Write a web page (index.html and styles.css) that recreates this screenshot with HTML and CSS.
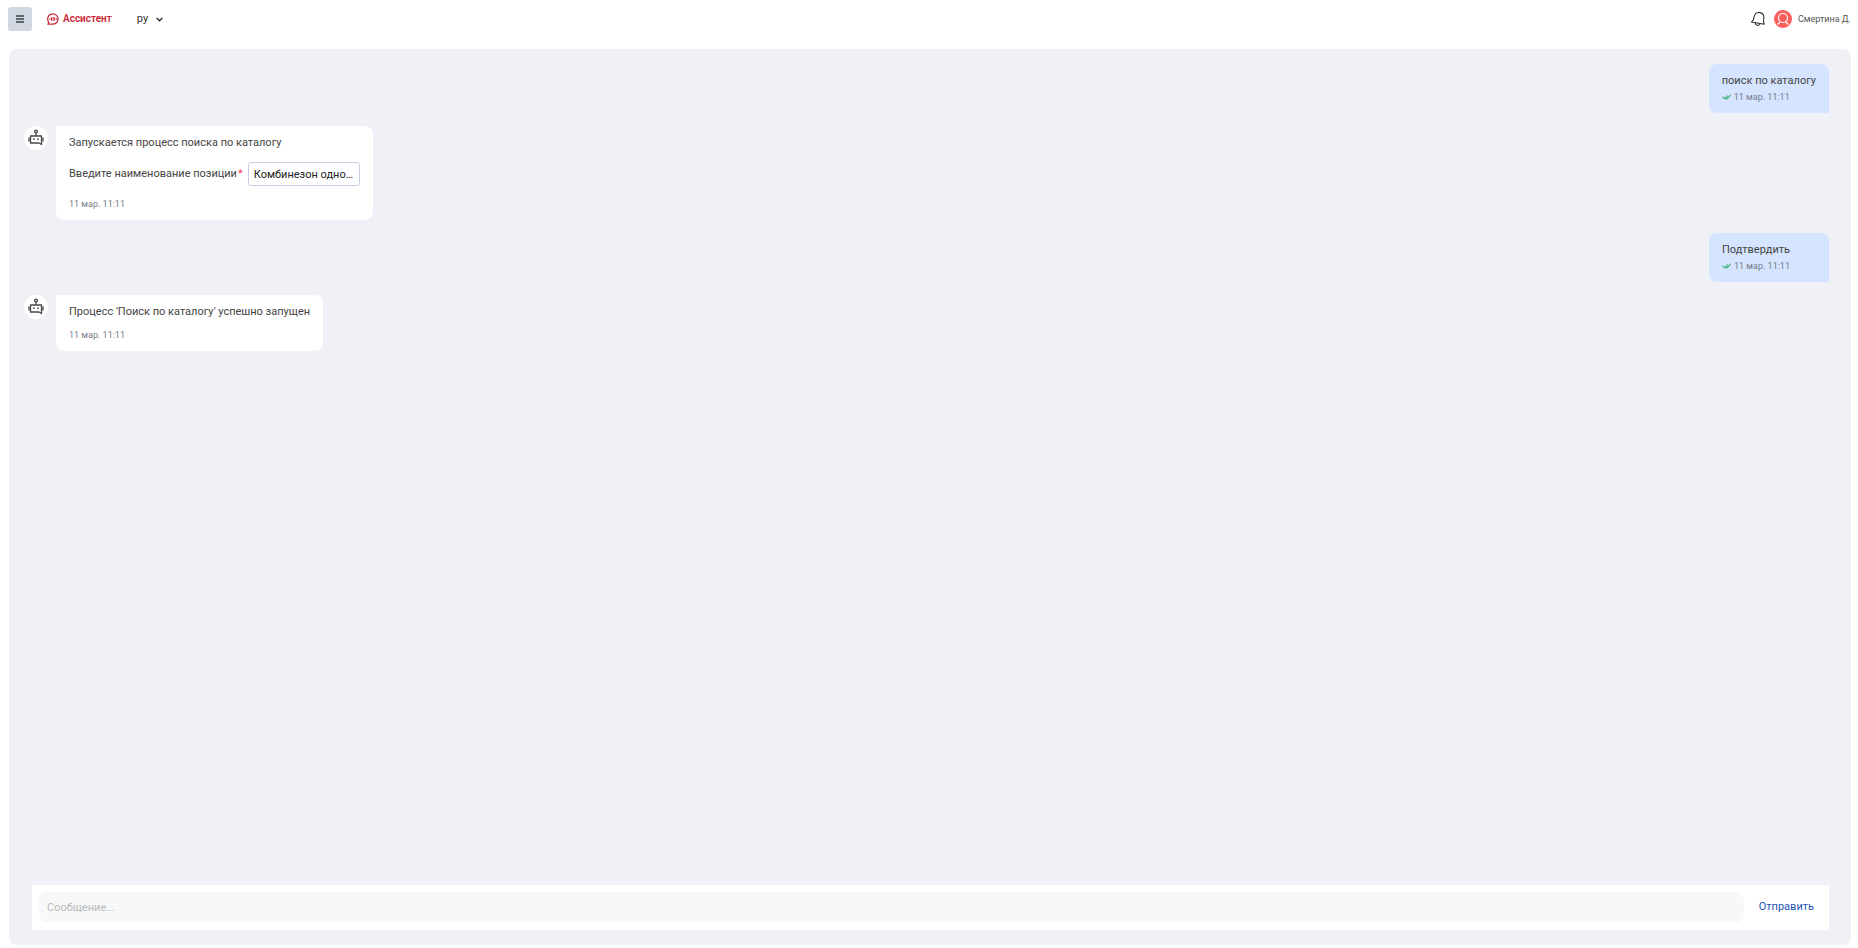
FILE: index.html
```html
<!DOCTYPE html>
<html lang="ru">
<head>
  <meta charset="UTF-8">
  <meta name="viewport" content="width=device-width, initial-scale=1.0">
  <title>Ассистент</title>
  <link rel="stylesheet" href="styles.css">
</head>
<body>
  <svg class="sprite" aria-hidden="true">
    <symbol id="robot" viewBox="0 0 16 18">
      <g fill="none" stroke="#484848" stroke-width="1.3">
        <circle cx="8" cy="3.5" r="1.4"/>
        <path d="M8 5v3M2.5 8h11v8.5l-2.5-1.5H2.5z" stroke-linejoin="round"/>
        <path d="M1 10v3M15 10v3" stroke-linecap="round"/>
      </g>
      <path d="M5 10.5h1.6v1.6H5zM9.2 10.5h1.6v1.6H9.2z" fill="#484848"/>
    </symbol>
    <symbol id="checks" viewBox="0 0 9 6">
      <path d="M.6 2.6 2.7 4.8 5.6 1.6M4 3.8l1 1L8.5 1" fill="none" stroke="#43b581" stroke-width="1.2"/>
    </symbol>
  </svg>

  <header class="header">
    <button class="menu-btn" type="button" aria-label="Меню">
      <svg width="8" height="8" viewBox="0 0 8 8"><path d="M0 1h8M0 4h8M0 7h8" stroke="#3c4148" stroke-width="1.5"/></svg>
    </button>
    <a class="brand" href="#">
      <svg width="12" height="12" viewBox="0 0 12 12" fill="none" stroke="#cb2634">
        <path d="M1.9 9.4A5.2 5.2 0 1 1 6 11.2H.8z" stroke-width="1.2" stroke-linejoin="round"/>
        <path d="M2.9 5.2v1.6M4.5 4.4v3.2M6.1 3.8v4.4M7.7 4.4v3.2M9.3 5.2v1.600" stroke-width="1"/>
      </svg>
      Ассистент
    </a>
    <button class="lang" type="button">
      ру
      <svg width="7" height="5" viewBox="0 0 7 5"><path d="M.6.9 3.5 3.8 6.4.9" fill="none" stroke="#222" stroke-width="1.3"/></svg>
    </button>
    <div class="user">
      <button class="bell" type="button" aria-label="Уведомления">
        <svg width="16" height="16" viewBox="0 0 16 16" fill="none" stroke="#333" stroke-width="1.1" stroke-linejoin="round">
          <path d="M4.2 5.4C5 2.400 7.500 1.200 10 1.600 12.900 2.200 14.200 4.500 13.800 7.500L13.400 10.500 14.200 13.200 1.400 11 3.400 8.800z"/>
          <path d="M5.400 11.900c0 2.600 3.200 3.500 4.400 1" stroke-linecap="round"/>
        </svg>
      </button>
      <a class="profile" href="#">
        <svg width="18" height="18" viewBox="0 0 18 18">
          <circle cx="9" cy="9" r="9" fill="#fa5f5c"/>
          <circle cx="9" cy="8" r="4.5" fill="none" stroke="#fff" stroke-width="1.2"/>
          <path d="M3.5 14.500 6.300 12M14.500 14.500 11.700 12" stroke="#fff" stroke-width="1.2"/>
        </svg>
        Смертина Д.
      </a>
    </div>
  </header>

  <main class="chat">
    <div class="messages">
      <div class="message own">
        <p class="text">поиск по каталогу</p>
        <div class="time"><svg width="9" height="6"><use href="#checks"/></svg>11 мар. 11:11</div>
      </div>

      <div class="row">
        <div class="avatar"><svg width="16" height="18"><use href="#robot"/></svg></div>
        <div class="message bot">
          <p class="text">Запускается процесс поиска по каталогу</p>
          <div class="field">
            <label for="position">Введите наименование позиции<span class="required">*</span></label>
            <input id="position" type="text" value="Комбинезон одно..." readonly>
          </div>
          <div class="time">11 мар. 11:11</div>
        </div>
      </div>

      <div class="message own">
        <p class="text">Подтвердить</p>
        <div class="time"><svg width="9" height="6"><use href="#checks"/></svg>11 мар. 11:11</div>
      </div>

      <div class="row">
        <div class="avatar"><svg width="16" height="18"><use href="#robot"/></svg></div>
        <div class="message bot">
          <p class="text">Процесс 'Поиск по каталогу' успешно запущен</p>
          <div class="time">11 мар. 11:11</div>
        </div>
      </div>
    </div>

    <form class="composer">
      <input type="text" placeholder="Сообщение..." aria-label="Сообщение">
      <button type="button">Отправить</button>
    </form>
  </main>
</body>
</html>
```

FILE: styles.css
```css
* {
  box-sizing: border-box;
}

body {
  margin: 0;
  height: 100vh;
  display: flex;
  flex-direction: column;
  background: #fff;
  color: #444;
  font-family: Roboto, sans-serif;
  font-size: 11px;
  line-height: 16px;
}

button,
input {
  font: inherit;
  border: none;
  outline: none;
}

button {
  background: none;
  padding: 0;
  cursor: pointer;
}

a {
  text-decoration: none;
}

svg {
  flex: none;
  display: block;
}

.sprite {
  position: absolute;
  width: 0;
  height: 0;
}

.header {
  display: flex;
  align-items: center;
  padding: 7px 7px 0 8px;
}

.menu-btn {
  width: 24px;
  height: 24px;
  display: flex;
  align-items: center;
  justify-content: center;
  background: #d1d8e2;
  border-radius: 3px;
}

.brand {
  display: flex;
  align-items: center;
  gap: 4px;
  margin-left: 15px;
  color: #cb2634;
  font-size: 10px;
  font-weight: 600;
}

.lang {
  display: flex;
  align-items: center;
  gap: 8px;
  margin-left: 25px;
  color: #333;
}

.user {
  display: flex;
  align-items: center;
  gap: 8px;
  margin-left: auto;
}

.profile {
  display: flex;
  align-items: center;
  gap: 6px;
  color: #555;
  font-size: 9px;
}

.chat {
  flex: 1;
  min-height: 0;
  display: flex;
  flex-direction: column;
  margin: 18px 7px 3px 9px;
  padding: 15px 22px 15px 15px;
  background: #eff1f6;
  border-radius: 8px;
}

.messages {
  flex: 1;
  min-height: 0;
  display: flex;
  flex-direction: column;
  gap: 13px;
  overflow-y: auto;
}

.row {
  display: flex;
  align-items: flex-start;
  gap: 8px;
}

.avatar {
  width: 24px;
  height: 24px;
  display: flex;
  justify-content: center;
  padding-top: 2px;
  background: #fff;
  border-radius: 50%;
}

.message {
  padding: 9px 13px 8px;
  border-radius: 8px;
}

.own {
  align-self: flex-end;
  min-width: 120px;
  background: #d5e5ff;
  border-bottom-right-radius: 0;
}

.bot {
  background: #fff;
  border-top-left-radius: 0;
}

.text {
  margin: 0;
}

.time {
  display: flex;
  align-items: center;
  gap: 3px;
  color: #747b87;
  font-size: 9px;
}

.bot .time {
  margin-top: 7px;
}

.field {
  display: flex;
  align-items: center;
  gap: 5px;
  margin: 11px 0 10px;
}

.required {
  margin-left: 1px;
  color: #f5454b;
}

.field input {
  width: 112px;
  height: 24px;
  padding: 0 5px;
  color: #222;
  background: #fff;
  border: 1px solid #c9cde0;
  border-radius: 3px;
  text-overflow: ellipsis;
}

.composer {
  display: flex;
  align-items: center;
  gap: 15px;
  margin-left: 8px;
  padding: 7px 15px 8px 7px;
  background: #fff;
}

.composer input {
  flex: 1;
  min-width: 0;
  height: 30px;
  padding: 0 8px;
  background: #f6f8fa;
  border-radius: 8px;
}

.composer input::placeholder {
  color: #b9b9b9;
}

.composer button {
  color: #2452b5;
}
```
